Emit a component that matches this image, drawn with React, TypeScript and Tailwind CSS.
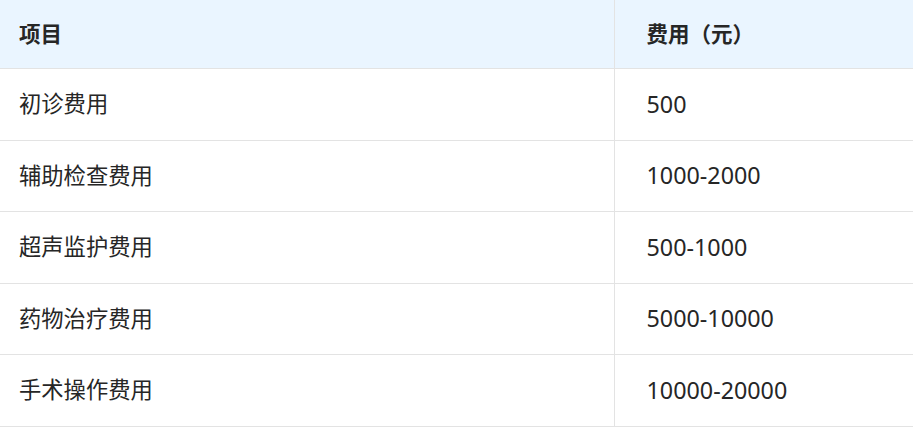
const rows = [
  ["初诊费用", "500"],
  ["辅助检查费用", "1000-2000"],
  ["超声监护费用", "500-1000"],
  ["药物治疗费用", "5000-10000"],
  ["手术操作费用", "10000-20000"],
];

export default function App() {
  return (
    <div className="w-[913px] h-[448px] bg-white overflow-hidden font-['Noto_Sans','Noto_Sans_CJK_SC',sans-serif] text-[#262626]">
      <table className="w-full border-collapse">
        <thead>
          <tr className="h-[68px] bg-[#eaf5ff] border-b border-[#e3e3e3] text-[21.5px]">
            <th className="w-[614px] pl-[19px] text-left font-bold border-r border-[#e3e3e3]">项目</th>
            <th className="pl-[32px] text-left font-bold">费用（元）</th>
          </tr>
        </thead>
        <tbody>
          {rows.map(([name, cost], i) => (
            <tr key={name} className={(i % 2 === 0 ? "h-[72px]" : "h-[71px]") + " border-b border-[#e3e3e3]"}>
              <td className="pl-[19px] text-[22.3px] border-r border-[#e3e3e3]">{name}</td>
              <td className="pl-[32px] text-[23.3px]">{cost}</td>
            </tr>
          ))}
        </tbody>
      </table>
    </div>
  );
}
